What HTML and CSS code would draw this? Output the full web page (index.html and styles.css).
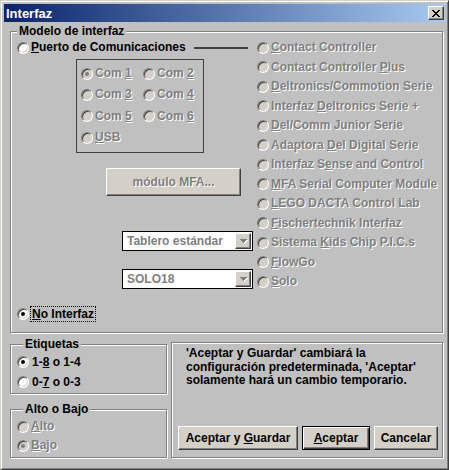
FILE: index.html
```html
<!DOCTYPE html>
<html lang="es">
<head>
<meta charset="utf-8">
<title>Interfaz</title>
<link rel="stylesheet" href="styles.css">
</head>
<body>
<div class="window">
  <div class="titlebar">
    <span class="title">Interfaz</span>
    <span class="close"><svg width="8" height="7" viewBox="0 0 8 7" shape-rendering="crispEdges"><path d="M0 0h2v1H0zM6 0h2v1H6zM1 1h2v1H1zM5 1h2v1H5zM2 2h4v1H2zM3 3h2v1H3zM2 4h4v1H2zM1 5h2v1H1zM5 5h2v1H5zM0 6h2v1H0zM6 6h2v1H6z" fill="#000"/></svg></span>
  </div>

  <fieldset class="group main">
    <legend>Modelo de interfaz</legend>
    <div class="main-cols">
      <div class="left-col">
        <div class="row opt"><span class="radio"></span><span class="lbl"><u>P</u>uerto de Comunicaciones</span><span class="connector"></span></div>
        <div class="combox">
          <div class="crow opt dis"><span class="radio on"></span><span class="lbl">Com <u>1</u></span></div>
          <div class="crow opt dis"><span class="radio"></span><span class="lbl">Com <u>2</u></span></div>
          <div class="crow opt dis"><span class="radio"></span><span class="lbl">Com <u>3</u></span></div>
          <div class="crow opt dis"><span class="radio"></span><span class="lbl">Com <u>4</u></span></div>
          <div class="crow opt dis"><span class="radio"></span><span class="lbl">Com <u>5</u></span></div>
          <div class="crow opt dis"><span class="radio"></span><span class="lbl">Com <u>6</u></span></div>
          <div class="crow opt dis"><span class="radio"></span><span class="lbl"><u>U</u>SB</span></div>
        </div>
        <div class="btn mfa dis"><span>módulo MFA...</span></div>
        <div class="combo first"><span class="ctext">Tablero estándar</span><span class="dd"><svg width="7" height="4" viewBox="0 0 7 4" shape-rendering="crispEdges"><path d="M0 0h7v1H0zM1 1h5v1H1zM2 2h3v1H2zM3 3h1v1H3z" fill="#808080"/></svg></span></div>
        <div class="combo second"><span class="ctext">SOLO18</span><span class="dd"><svg width="7" height="4" viewBox="0 0 7 4" shape-rendering="crispEdges"><path d="M0 0h7v1H0zM1 1h5v1H1zM2 2h3v1H2zM3 3h1v1H3z" fill="#808080"/></svg></span></div>
        <div class="row opt nointer"><span class="radio on"></span><span class="lbl focus"><u>N</u>o Interfaz</span></div>
      </div>
      <div class="right-col">
        <div class="row opt dis"><span class="radio"></span><span class="lbl"><u>C</u>ontact Controller</span></div>
        <div class="row opt dis"><span class="radio"></span><span class="lbl">Contact Controller <u>P</u>lus</span></div>
        <div class="row opt dis"><span class="radio"></span><span class="lbl"><u>D</u>eltronics/Commotion Serie</span></div>
        <div class="row opt dis"><span class="radio"></span><span class="lbl">Interfaz <u>D</u>eltronics Serie +</span></div>
        <div class="row opt dis"><span class="radio"></span><span class="lbl"><u>D</u>el/Comm Junior Serie</span></div>
        <div class="row opt dis"><span class="radio"></span><span class="lbl">Adaptora <u>D</u>el Digital Serie</span></div>
        <div class="row opt dis"><span class="radio"></span><span class="lbl">Interfaz S<u>e</u>nse and Control</span></div>
        <div class="row opt dis"><span class="radio"></span><span class="lbl"><u>M</u>FA Serial Computer Module</span></div>
        <div class="row opt dis"><span class="radio"></span><span class="lbl"><u>L</u>EGO DACTA Control Lab</span></div>
        <div class="row opt dis"><span class="radio"></span><span class="lbl"><u>F</u>ischertechnik Interfaz</span></div>
        <div class="row opt dis"><span class="radio"></span><span class="lbl">Sistema <u>K</u>ids Chip P.I.C.s</span></div>
        <div class="row opt dis"><span class="radio"></span><span class="lbl"><u>F</u>lowGo</span></div>
        <div class="row opt dis"><span class="radio"></span><span class="lbl"><u>S</u>olo</span></div>
      </div>
    </div>
  </fieldset>

  <div class="bottom">
    <div class="stack">
      <fieldset class="group etq">
        <legend>Etiquetas</legend>
        <div class="row opt"><span class="radio on"></span><span class="lbl">1-<u>8</u> o 1-4</span></div>
        <div class="row opt"><span class="radio"></span><span class="lbl">0-<u>7</u> o 0-3</span></div>
      </fieldset>
      <fieldset class="group ab">
        <legend>Alto o Bajo</legend>
        <div class="row opt dis"><span class="radio"></span><span class="lbl"><u>A</u>lto</span></div>
        <div class="row opt dis"><span class="radio on"></span><span class="lbl"><u>B</u>ajo</span></div>
      </fieldset>
    </div>
    <div class="panel">
      <p class="msg">'Aceptar y Guardar' cambiará la<br>configuración predeterminada, 'Aceptar'<br>solamente hará un cambio temporario.</p>
      <div class="buttons">
        <div class="btn b-save"><span>Aceptar y <u>G</u>uardar</span></div>
        <div class="btn b-ok default"><span><u>A</u>ceptar</span></div>
        <div class="btn b-cancel"><span>Cancelar</span></div>
      </div>
    </div>
  </div>
</div>
</body>
</html>
```
FILE: styles.css
```css
* { box-sizing: border-box; }
html, body { margin: 0; padding: 0; }
body {
  background: #c0c0c0;
  font: bold 12px/13px "Liberation Sans", Arial, sans-serif;
  color: #000;
}
u { text-decoration: underline; text-underline-offset: 1px; }

.window {
  width: 449px;
  height: 470px;
  border: 1px solid;
  border-color: #d4d0c8 #404040 #404040 #d4d0c8;
  box-shadow: inset 1px 1px #fff, inset -1px -1px #808080;
  padding: 3px;
  background: #c0c0c0;
  display: flex;
  flex-direction: column;
}

.titlebar {
  height: 18px;
  flex: none;
  background: linear-gradient(to right, #0a246a, #a6caf0);
  display: flex;
  align-items: center;
  justify-content: space-between;
  padding: 0 1px 0 2px;
}
.title { color: #fff; font-size: 13px; }
.close {
  width: 16px;
  height: 14px;
  background: #d4d0c8;
  border: 1px solid;
  border-color: #fff #404040 #404040 #fff;
  box-shadow: inset -1px -1px #808080;
  display: flex;
  align-items: center;
  justify-content: center;
}

.group {
  margin: 0;
  padding: 0;
  min-width: 0;
  border: 1px solid #808080;
  box-shadow: inset 1px 1px #fff, 1px 1px #fff;
}
.group > legend {
  margin-left: 6px;
  padding: 0 2px;
  line-height: 13px;
  background: #c0c0c0;
}

.main {
  margin: 3px 2px 0 6px;
  width: 433px;
  flex: none;
}
.main-cols { display: flex; padding-bottom: 10px; }
.left-col {
  width: 246px;
  flex: none;
  display: flex;
  flex-direction: column;
  padding-left: 6px;
}
.right-col { display: flex; flex-direction: column; }

.row { height: 19.5px; display: flex; align-items: center; white-space: nowrap; }
.opt .radio { margin-right: 2px; }

.radio {
  width: 12px;
  height: 12px;
  flex: none;
  border-radius: 50%;
  background: #fff;
  border: 1px solid;
  border-color: #808080 #fff #fff #808080;
  box-shadow: inset 1px 1px #404040, inset -1px -1px #d4d0c8;
  position: relative;
}
.radio.on::after {
  content: "";
  position: absolute;
  left: 3px;
  top: 3px;
  width: 4px;
  height: 4px;
  border-radius: 50%;
  background: #000;
}
.dis { color: #808080; text-shadow: 1px 1px 0 #fff; }
.dis .radio { background: #d4d0c8; }
.dis .radio.on::after { background: #808080; }

.connector {
  width: 54px;
  height: 2px;
  background: #404040;
  margin-left: auto;
  margin-right: 9px;
}

.combox {
  margin: 1.5px 0 0 59px;
  width: 128px;
  height: 94px;
  border: 1px solid #404040;
  padding: 3px 0 0 4px;
  display: grid;
  grid-template-columns: 62px 62px;
  grid-auto-rows: 21.3px;
  align-content: start;
}
.crow { display: flex; align-items: center; white-space: nowrap; }
.crow .radio { margin-right: 2px; }

.btn {
  height: 24px;
  flex: none;
  background: #d4d0c8;
  border: 1px solid;
  border-color: #fff #404040 #404040 #fff;
  box-shadow: inset -1px -1px #808080;
  display: flex;
  align-items: center;
  justify-content: center;
  white-space: nowrap;
}
.btn.default {
  border-color: #000;
  box-shadow: inset 1px 1px #fff, inset -1px -1px #404040, inset -2px -2px #808080;
}
.mfa {
  margin: 15px 0 0 89px;
  width: 135px;
  height: 28px;
}

.combo {
  margin-left: 105px;
  width: 131px;
  height: 20px;
  border: 1px solid #000;
  background: #fff;
  padding: 1px;
  display: flex;
  align-items: center;
  justify-content: space-between;
}
.combo.first { margin-top: 35px; }
.combo.second { margin-top: 18px; }
.ctext { color: #808080; padding-left: 3px; white-space: nowrap; }
.dd {
  width: 16px;
  height: 16px;
  flex: none;
  background: #d4d0c8;
  border: 1px solid;
  border-color: #fff #404040 #404040 #fff;
  box-shadow: inset -1px -1px #808080;
  display: flex;
  align-items: center;
  justify-content: center;
}
.dd svg { filter: drop-shadow(1px 1px 0 #fff); }

.nointer { margin-top: 16px; height: 17px; }
.focus { outline: 1px dotted #000; padding: 0 1px; line-height: 14px; }

.bottom {
  display: flex;
  gap: 4px;
  margin: 5px 2px 0 6px;
  align-items: flex-start;
}
.stack { width: 157px; flex: none; display: flex; flex-direction: column; }
.etq { padding: 1px 0 1px 6px; }
.etq .row { height: 20px; }
.etq .radio { margin-right: 3px; }
.ab { margin-top: 9px; padding: 1px 0 2px 6px; }
.ab .row { height: 19px; }

.panel {
  width: 272px;
  height: 116px;
  margin-top: 4px;
  border: 1px solid #808080;
  box-shadow: inset 1px 1px #fff, 1px 1px #fff;
  padding: 4px 4px 7px 6px;
  display: flex;
  flex-direction: column;
  justify-content: space-between;
}
.msg { margin: 0; padding-left: 8px; line-height: 13.5px; white-space: nowrap; }
.buttons { display: flex; justify-content: flex-end; gap: 4px; }
.b-save { width: 120px; }
.b-ok { width: 68px; }
.b-cancel { width: 64px; }
```
